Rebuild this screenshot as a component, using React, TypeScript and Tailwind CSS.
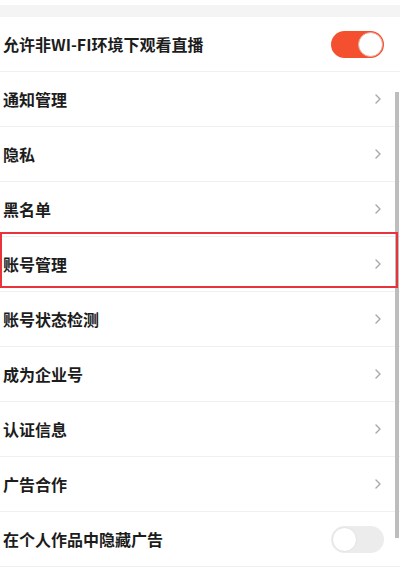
import React from 'react'

const rows = [
  { label: '通知管理' },
  { label: '隐私' },
  { label: '黑名单' },
  { label: '账号管理' },
  { label: '账号状态检测' },
  { label: '成为企业号' },
  { label: '认证信息' },
  { label: '广告合作' },
]

function Chevron() {
  return (
    <svg width="8" height="12" viewBox="0 0 8 12" className="mr-[18px]">
      <polyline points="2,2 6,6 2,10" fill="none" stroke="#a8a8a8" strokeWidth="1.4" strokeLinecap="round" strokeLinejoin="round" />
    </svg>
  )
}

function Toggle({ on }: { on: boolean }) {
  return on ? (
    <div className="mr-[16px] flex h-[27px] w-[53px] items-center justify-end rounded-full bg-[#f4502f] p-[1px]">
      <div className="h-[25px] w-[25px] rounded-full border border-[#e9a393] bg-white" />
    </div>
  ) : (
    <div className="mr-[16px] flex h-[27px] w-[53px] items-center justify-start rounded-full bg-[#ececec] p-[1px]">
      <div className="h-[25px] w-[25px] rounded-full border border-[#e2e2e2] bg-white" />
    </div>
  )
}

function Row({ label, right }: { label: string; right: React.ReactNode }) {
  return (
    <div className="flex h-[55px] items-center justify-between border-b border-[#f0f0f0] pl-[3px]">
      <span className="text-[16px] font-semibold text-[#1c1c1c]">{label}</span>
      {right}
    </div>
  )
}

export default function App() {
  return (
    <div
      className="relative h-[579px] w-[400px] overflow-hidden bg-white"
      style={{ fontFamily: '"Noto Sans CJK SC", "Noto Sans", sans-serif' }}
    >
      <div className="mt-[5px] h-[12px] bg-[#f4f4f4]" />
      <Row label="允许非WI-FI环境下观看直播" right={<Toggle on />} />
      {rows.map((r) => (
        <Row key={r.label} label={r.label} right={<Chevron />} />
      ))}
      <Row label="在个人作品中隐藏广告" right={<Toggle on={false} />} />

      {/* scrollbar */}
      <div className="absolute left-[395px] top-[92px] h-[446px] w-[4px] bg-[#bdbdbd]" />
      {/* highlight box */}
      <div className="absolute left-0 top-[232px] h-[56px] w-[398px] border-2 border-[#e8333a]" />
    </div>
  )
}
